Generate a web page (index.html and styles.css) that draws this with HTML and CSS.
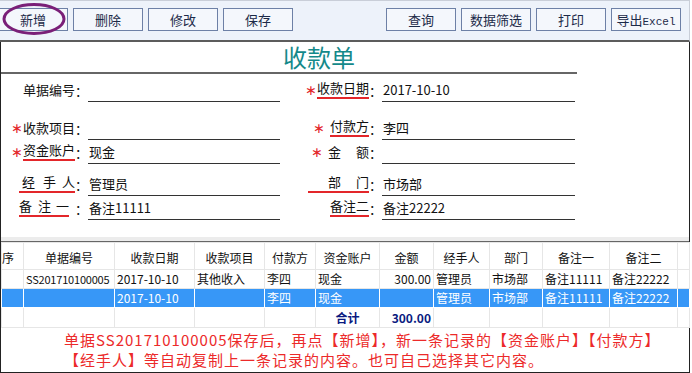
FILE: index.html
```html
<!DOCTYPE html>
<html lang="zh-CN">
<head>
    <meta charset="UTF-8">
    <title>收款单</title>
    <link rel="stylesheet" href="styles.css">
</head>
<body>
    <div class="page">
        <div class="toolbar">
            <div class="btn-group first">
                <button class="btn">新增</button>
                <button class="btn">删除</button>
                <button class="btn">修改</button>
                <button class="btn">保存</button>
            </div>
            <div class="btn-group">
                <button class="btn">查询</button>
                <button class="btn">数据筛选</button>
                <button class="btn">打印</button>
                <button class="btn">导出<span class="mono">Excel</span></button>
            </div>
        </div>

        <!-- 圈出“新增”按钮 -->
        <svg class="ring" width="68" height="34" viewBox="0 0 68 34">
            <ellipse cx="33" cy="17" rx="30" ry="14.5" fill="none" stroke="#7a1f78" stroke-width="3"/>
        </svg>

        <div class="main">
            <div class="form">
                <div class="title">收款单</div>

                <div class="fields">
                    <div class="row r1">
                        <div class="label"><i class="star">∗</i><span class="plain">单据编号</span>：</div>
                        <div class="field"></div>
                        <div class="label"><i class="star">∗</i><span class="mark">收款日期</span>：</div>
                        <div class="field">2017-10-10</div>
                    </div>
                    <div class="row r2">
                        <div class="label"><i class="star">∗</i><span>收款项目</span>：</div>
                        <div class="field"></div>
                        <div class="label"><i class="star gap">∗</i><span class="mark">付款方</span>：</div>
                        <div class="field">李四</div>
                    </div>
                    <div class="row r3">
                        <div class="label"><i class="star">∗</i><span class="mark">资金账户</span>：</div>
                        <div class="field">现金</div>
                        <div class="label"><i class="star gap">∗</i><span>金<b class="sp w15"></b>额</span>：</div>
                        <div class="field"></div>
                    </div>
                    <div class="row r4">
                        <div class="label"><span class="mark lpad">经<b class="sp w8"></b>手<b class="sp w6"></b>人</span>：</div>
                        <div class="field">管理员</div>
                        <div class="label"><span class="mark pad">部<b class="sp w15"></b>门</span>：</div>
                        <div class="field">市场部</div>
                    </div>
                    <div class="row r5">
                        <div class="label"><span class="mark">备<b class="sp w6"></b>注<b class="sp w5"></b>一</span><b class="sp w6"></b>：</div>
                        <div class="field">备注11111</div>
                        <div class="label"><span class="mark">备注二</span>：</div>
                        <div class="field">备注22222</div>
                    </div>
                </div>
            </div>

            <div class="band"></div>

            <table class="grid">
                <colgroup>
                    <col style="width:22px"><col style="width:91px"><col style="width:80px"><col style="width:70px">
                    <col style="width:51px"><col style="width:64px"><col style="width:54px"><col style="width:56px">
                    <col style="width:53px"><col style="width:67px"><col style="width:68px"><col>
                </colgroup>
                <thead>
                    <tr>
                        <th class="seq">序</th>
                        <th>单据编号</th>
                        <th>收款日期</th>
                        <th>收款项目</th>
                        <th>付款方</th>
                        <th>资金账户</th>
                        <th>金额</th>
                        <th>经手人</th>
                        <th>部门</th>
                        <th>备注一</th>
                        <th>备注二</th>
                        <th></th>
                    </tr>
                </thead>
                <tbody>
                    <tr>
                        <td></td>
                        <td class="code">SS201710100005</td>
                        <td>2017-10-10</td>
                        <td>其他收入</td>
                        <td>李四</td>
                        <td>现金</td>
                        <td class="num">300.00</td>
                        <td>管理员</td>
                        <td>市场部</td>
                        <td>备注11111</td>
                        <td>备注22222</td>
                        <td></td>
                    </tr>
                    <tr class="selected">
                        <td></td>
                        <td></td>
                        <td>2017-10-10</td>
                        <td></td>
                        <td>李四</td>
                        <td>现金</td>
                        <td></td>
                        <td>管理员</td>
                        <td>市场部</td>
                        <td>备注11111</td>
                        <td>备注22222</td>
                        <td></td>
                    </tr>
                    <tr class="total">
                        <td></td>
                        <td></td>
                        <td></td>
                        <td></td>
                        <td></td>
                        <td class="sum-label">合计</td>
                        <td class="num">300.00</td>
                        <td></td>
                        <td></td>
                        <td></td>
                        <td></td>
                        <td></td>
                    </tr>
                </tbody>
            </table>

            <div class="note">
                <div class="note-line">单据SS201710100005保存后，再点【新增】，新一条记录的【资金账户】【付款方】</div>
                <div class="note-line">【经手人】等自动复制上一条记录的内容。也可自己选择其它内容。</div>
            </div>
        </div>
    </div>
</body>
</html>
```

FILE: styles.css
```css
body {
    margin: 0;
    font-family: "Noto Sans CJK SC", sans-serif;
    font-size: 12px;
    color: #111;
    background: #fff;
}

.page {
    position: relative;
    width: 690px;
    height: 373px;
    overflow: hidden;
}

/* 工具栏 */
.toolbar {
    height: 32px;
    padding-top: 7px;
    padding-right: 8px;
    background: #edf2fa;
    border-top: 1px solid #c9ced8;
    border-right: 1px solid #c9ced8;
    border-bottom: 2px solid #5c5c5c;
    display: flex;
    justify-content: space-between;
    align-items: flex-start;
}

.btn-group {
    display: flex;
    gap: 5px;
}

.btn-group.first {
    margin-left: -2px;
}

.btn {
    width: 70px;
    height: 23px;
    padding: 0;
    border: 1px solid #6d80a6;
    background: #f4f7fc;
    color: #1c2a48;
    font-family: "Noto Sans CJK SC", sans-serif;
    font-size: 13px;
    line-height: 21px;
}

.mono {
    font-family: "Liberation Mono", monospace;
    font-size: 11px;
}

.ring {
    position: absolute;
    left: 1px;
    top: 2px;
}

/* 主体 */
.main {
    height: 330px;
    border-left: 1px solid #222;
    border-right: 1px solid #222;
    border-bottom: 1px solid #222;
}

.form {
    height: 195px;
}

.title {
    width: 516px;
    height: 30px;
    padding-left: 60px;
    text-align: center;
    font-size: 24px;
    line-height: 30px;
    color: #14898a;
    border-bottom: 2px solid #666;
}

.row {
    display: grid;
    grid-template-columns: 87px 192px 102px 193px;
}

.r1 { height: 28px; }
.r2 { height: 38px; }
.r3 { height: 24px; }
.r4 { height: 32px; }
.r5 { height: 24px; }

.label {
    display: flex;
    justify-content: flex-end;
    align-items: flex-end;
    padding-bottom: 3px;
    font-size: 13px;
    line-height: 16px;
}

.label span {
    padding-bottom: 1px;
}

/* 单据编号没有星号，只占位 */
.r1 .label:first-child .star {
    visibility: hidden;
}

.mark {
    border-bottom: 2px solid #e3262a;
}

.pad {
    padding-left: 20px;
}

.lpad {
    padding-left: 3px;
}

.sp {
    display: inline-block;
}

.w5 { width: 5px; }
.w6 { width: 6px; }
.w8 { width: 8px; }
.w15 { width: 15px; }

.star {
    font-style: normal;
    font-family: "DejaVu Sans", sans-serif;
    color: #e3262a;
    font-size: 14px;
    line-height: 16px;
    padding-bottom: 1px;
}

.star.gap {
    margin-right: 5px;
}

.field {
    border-bottom: 1px solid #333;
    display: flex;
    align-items: flex-end;
    padding-left: 1px;
    padding-bottom: 3px;
    font-size: 13px;
    line-height: 16px;
}

.band {
    height: 4px;
    background: #ececec;
    border-bottom: 1px solid #666;
}

/* 明细表格 */
.grid {
    width: 689px;
    border-collapse: collapse;
    table-layout: fixed;
}

.grid th,
.grid td {
    border: 1px solid #e6e6e6;
    padding: 0 2px;
    white-space: nowrap;
    overflow: hidden;
    text-align: left;
}

.grid th {
    height: 24px;
    padding-top: 2px;
    font-weight: normal;
    text-align: center;
    font-size: 12px;
}

.grid th.seq {
    text-align: left;
    padding-left: 0;
}

.grid td {
    height: 18px;
    line-height: 18px;
}

.grid td.code {
    font-size: 11px;
    letter-spacing: -0.2px;
}

.grid td.num {
    text-align: right;
}

.selected td {
    background: #3797f7;
    color: #fff;
    border-color: #fff;
}

.total td {
    height: 19px;
    color: #0a1a80;
    font-weight: bold;
}

.total td.sum-label {
    text-align: center;
}

.note {
    padding: 2px 0 0 63px;
    color: #ec2a2a;
    font-size: 15px;
    letter-spacing: 1px;
    white-space: nowrap;
}

.note-line {
    height: 20px;
    line-height: 20px;
}
```
